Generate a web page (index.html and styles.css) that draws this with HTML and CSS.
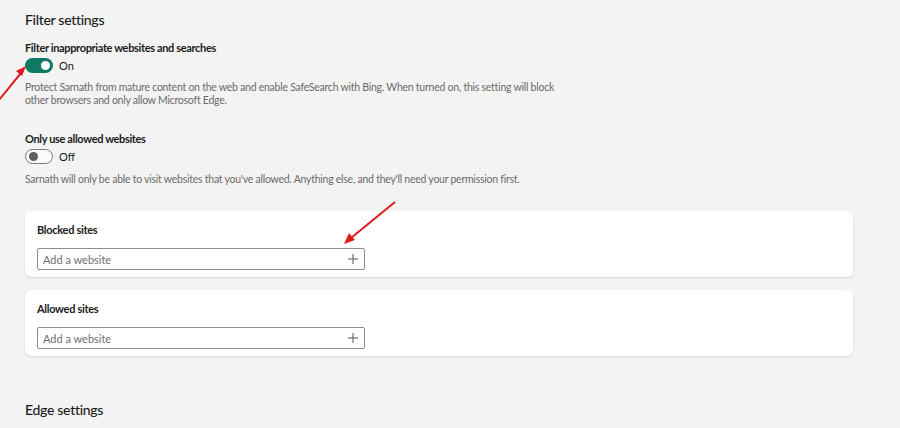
FILE: index.html
```html
<!DOCTYPE html>
<html lang="en">
<head>
    <meta charset="UTF-8">
    <meta name="viewport" content="width=device-width, initial-scale=1.0">
    <title>Family Safety - Content filters</title>
    <link rel="stylesheet" href="styles.css">
</head>
<body>

    <main class="page">
        <!-- Filter settings -->
        <h2 class="section-title">Filter settings</h2>

        <div class="setting">
            <div class="setting-label">Filter inappropriate websites and searches</div>
            <div class="toggle-row">
                <span class="toggle on"><span class="knob"></span></span>
                <span class="toggle-text">On</span>
            </div>
            <p class="setting-desc">Protect Sarnath from mature content on the web and enable SafeSearch with Bing. When turned on, this setting will block<br>other browsers and only allow Microsoft Edge.</p>
        </div>

        <div class="setting">
            <div class="setting-label">Only use allowed websites</div>
            <div class="toggle-row">
                <span class="toggle off"><span class="knob"></span></span>
                <span class="toggle-text">Off</span>
            </div>
            <p class="setting-desc">Sarnath will only be able to visit websites that you've allowed. Anything else, and they'll need your permission first.</p>
        </div>

        <div class="card">
            <div class="card-title">Blocked sites</div>
            <div class="site-input">
                <input type="text" placeholder="Add a website">
                <svg class="plus" width="10" height="10" viewBox="0 0 10 10"><path d="M5 0v10M0 5h10" stroke="#555" stroke-width="1"/></svg>
            </div>
        </div>

        <div class="card">
            <div class="card-title">Allowed sites</div>
            <div class="site-input">
                <input type="text" placeholder="Add a website">
                <svg class="plus" width="10" height="10" viewBox="0 0 10 10"><path d="M5 0v10M0 5h10" stroke="#555" stroke-width="1"/></svg>
            </div>
        </div>

        <h2 class="section-title edge">Edge settings</h2>
    </main>

    <!-- Red annotation arrows -->
    <svg class="arrow arrow-toggle" width="40" height="50" viewBox="0 0 40 50">
        <line x1="1" y1="44" x2="23" y2="17" stroke="#e01b1b" stroke-width="2"/>
        <polygon points="28,10 18,15 24,20" fill="#e01b1b"/>
    </svg>
    <svg class="arrow arrow-blocked" width="60" height="50" viewBox="0 0 60 50">
        <line x1="55" y1="2" x2="11" y2="38" stroke="#e01b1b" stroke-width="2"/>
        <polygon points="4,44 9,33 15,40" fill="#e01b1b"/>
    </svg>

</body>
</html>
```

FILE: styles.css
```css
/* Global Styles */
body {
    font-family: 'Lato', 'Open Sans', sans-serif;
    background-color: #f3f3f3;
    color: #1b1b1b;
    margin: 0;
}

.page {
    padding: 10px 47px 0 25px;
}

.section-title {
    font-size: 14px;
    font-weight: 500;
    letter-spacing: -0.3px;
    margin: 0;
    line-height: 20px;
}

.section-title.edge {
    margin-top: 44px;
}

.setting {
    margin-top: 10px;
}

.setting + .setting {
    margin-top: 24px;
}

.setting-label {
    font-size: 11px;
    font-weight: 700;
    letter-spacing: -0.35px;
    line-height: 16px;
}

.toggle-row {
    display: flex;
    align-items: center;
    gap: 6px;
    margin-top: 1px;
    height: 16px;
}

.toggle {
    width: 28px;
    height: 15px;
    border-radius: 8px;
    box-sizing: border-box;
    display: flex;
    align-items: center;
    padding: 0 3px;
}

.toggle.on {
    background-color: #0f7a63;
    justify-content: flex-end;
}

.toggle.off {
    border: 1px solid #7a7a7a;
    background-color: #fafafa;
}

.knob {
    width: 9px;
    height: 9px;
    border-radius: 50%;
    background-color: #fff;
}

.toggle.off .knob {
    background-color: #5f5f5f;
}

.toggle-text {
    font-size: 11px;
}

.setting-desc {
    font-size: 10.5px;
    letter-spacing: -0.25px;
    color: #6b6b6b;
    line-height: 13px;
    margin: 8px 0 0;
}

.setting + .setting .setting-desc {
    margin-top: 9px;
}

.card {
    background-color: #fff;
    border-radius: 6px;
    box-shadow: 0 1px 2px rgba(0, 0, 0, 0.12);
    padding: 11px 12px 8px;
    margin-top: 25px;
    height: 47px;
}

.card + .card {
    margin-top: 13px;
}

.card-title {
    font-size: 11px;
    font-weight: 700;
    letter-spacing: -0.3px;
    line-height: 16px;
}

.site-input {
    display: flex;
    align-items: center;
    width: 328px;
    height: 22px;
    box-sizing: border-box;
    border: 1px solid #8d8d8d;
    border-radius: 2px;
    margin-top: 10px;
    padding: 0 6px 0 5px;
}

.site-input input {
    flex: 1;
    border: none;
    outline: none;
    font-family: inherit;
    font-size: 11px;
    padding: 0;
    background: transparent;
}

.site-input input::placeholder {
    color: #707070;
}

.arrow {
    position: absolute;
}

.arrow-toggle {
    left: -2px;
    top: 56px;
}

.arrow-blocked {
    left: 340px;
    top: 200px;
}
```
